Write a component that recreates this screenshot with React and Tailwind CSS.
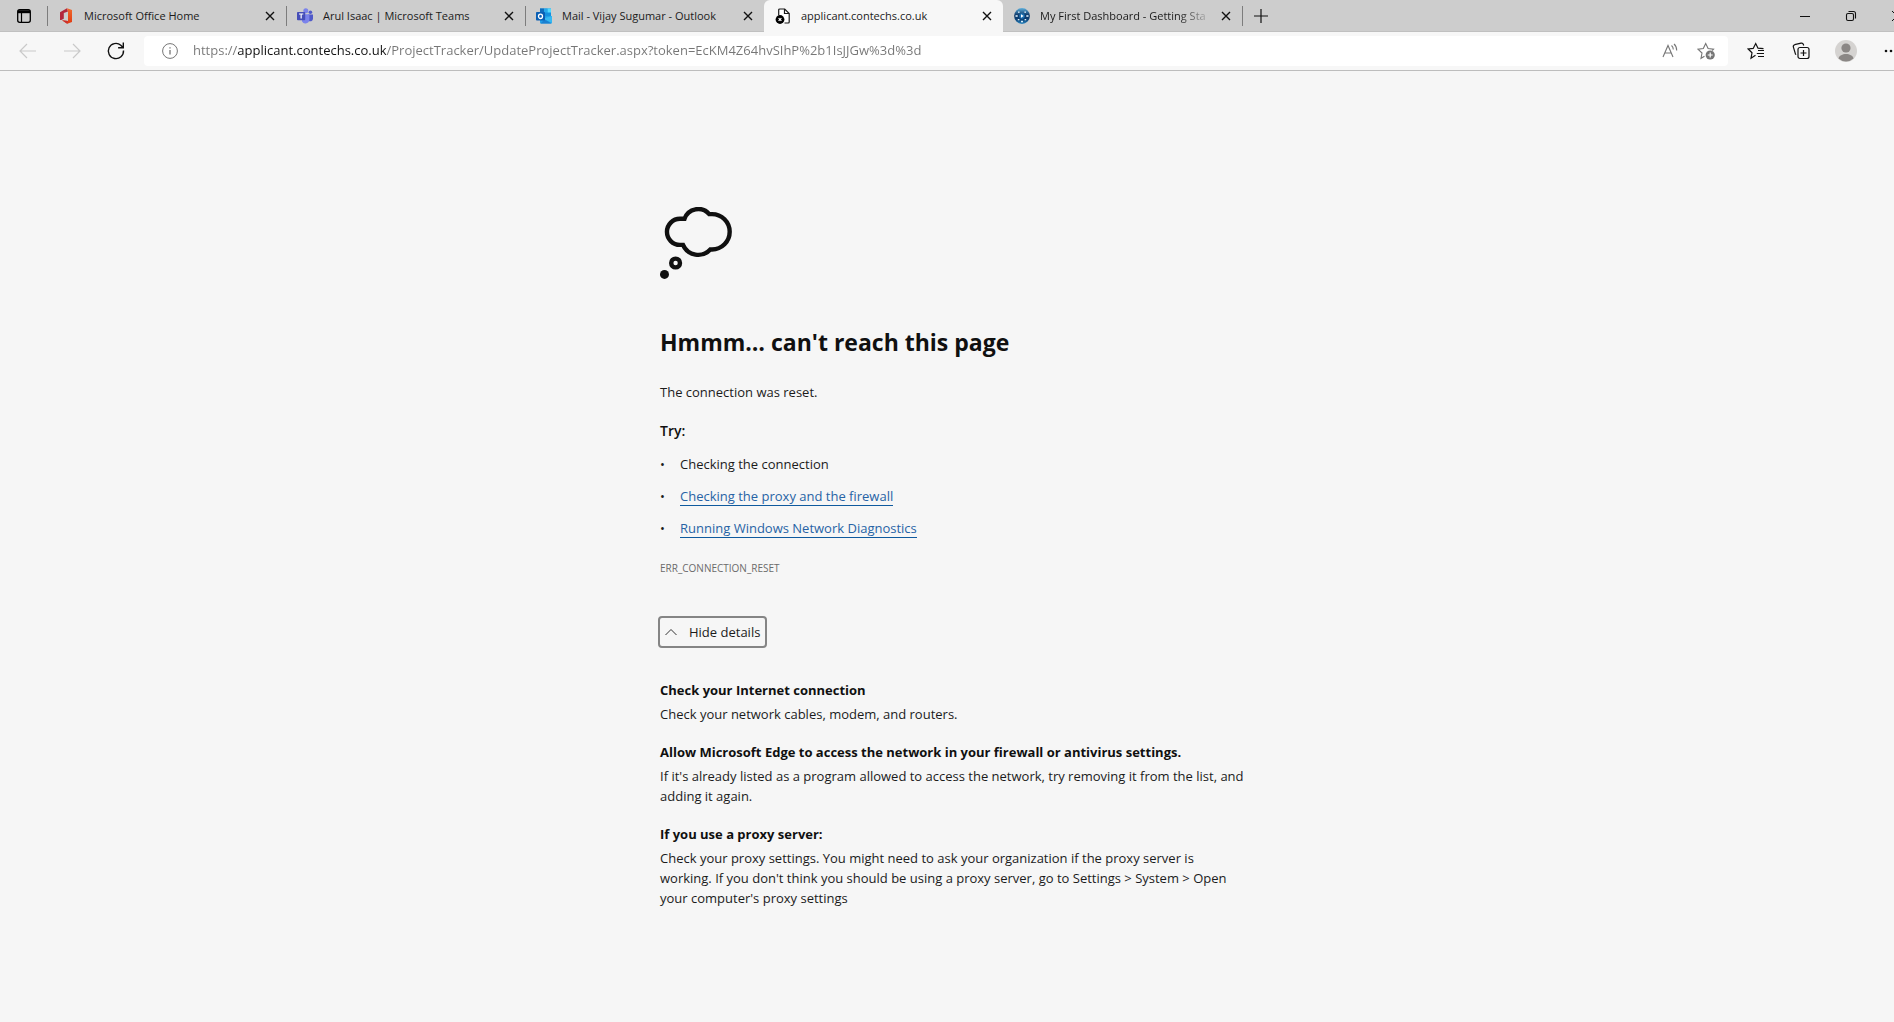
import React from "react";

const OfficeIcon = () => (
  <svg viewBox="0 0 16 16" className="size-4">
    <defs>
      <linearGradient id="office" x1="0" y1="0" x2="0" y2="1">
        <stop offset="0" stopColor="#f06a2c" />
        <stop offset="1" stopColor="#e03a12" />
      </linearGradient>
    </defs>
    <path d="M2 4.200 9 .3l1 3.100-4.200 1.700v5.700L3.300 12 2 12Z" fill="#b3263c" />
    <path d="m9 .2 5 1.800v12L9.200 15.800 4 12.300l6 .6V3.200Z" fill="url(#office)" />
    <path d="M4 12.300 10 12.900 9.200 15.800Z" fill="#c92f30" />
  </svg>
);

const TeamsIcon = () => (
  <svg viewBox="0 0 16 16" className="size-4">
    <circle cx="13.4" cy="4.2" r="1.8" fill="#5059c9" />
    <path d="M11 6.6h5v4.2a2.6 2.6 0 0 1-4.6 1.6Z" fill="#5059c9" />
    <circle cx="8.8" cy="2.8" r="2.5" fill="#7b83eb" />
    <path d="M5 6.3h7.4v5.2a4 4 0 0 1-7.4 2Z" fill="#7b83eb" />
    <rect x="0" y="4" width="8.2" height="8.2" rx="0.8" fill="#464eb8" />
    <path d="M2 6h4.3M4.15 6v4.6" stroke="#fff" strokeWidth="1.2" />
  </svg>
);

const OutlookIcon = () => (
  <svg viewBox="0 0 16 16" className="size-4">
    <path d="M4 .5h11v8H4Z" fill="#1490df" />
    <path d="M4 .5h4v4H4Z" fill="#0f6cbd" />
    <path d="M8 .5h3.6v4H8Z" fill="#28a8ea" />
    <path d="M11.6.5H15v4h-3.4Z" fill="#50d9ff" />
    <path d="M4 8h12v6.6a1 1 0 0 1-1 1H5a1 1 0 0 1-1-1Z" fill="#1f9fe8" />
    <path d="M16 8v7L7 10.5Z" fill="#35b8f1" />
    <path d="m4.500 15.500 4-4 7 4Z" fill="#1a7fd0" />
    <rect x="0" y="4" width="9" height="8.600" rx="0.800" fill="#0a5fb4" />
    <ellipse cx="4.500" cy="8.300" rx="2" ry="2.200" fill="none" stroke="#fff" strokeWidth="1.300" />
  </svg>
);

const BrokenPageIcon = () => (
  <svg viewBox="0 0 16 16" className="size-4">
    <path d="M3.700 7V2a1 1 0 0 1 1-1h5l4.500 4.500v8.500a1 1 0 0 1-1 1H9.500" fill="#fff" stroke="#1a1a1a" strokeWidth="1.200" />
    <path d="M9.500 1v4.500h4.500" fill="none" stroke="#1a1a1a" strokeWidth="1.200" />
    <circle cx="5" cy="11.500" r="4.400" fill="#000" />
    <path d="m3.600 10.100 2.800 2.800m0-2.800-2.800 2.800" stroke="#fff" strokeWidth="1.200" />
  </svg>
);

const DashboardIcon = () => (
  <svg viewBox="0 0 16 16" className="size-4">
    <defs>
      <linearGradient id="globe" x1="0" y1="0" x2="0" y2="1">
        <stop offset="0" stopColor="#5fb0dc" />
        <stop offset="0.450" stopColor="#0b3566" />
        <stop offset="0.700" stopColor="#0b3f74" />
        <stop offset="1" stopColor="#2a86c0" />
      </linearGradient>
    </defs>
    <circle cx="8" cy="8" r="7.900" fill="url(#globe)" />
    <circle cx="8" cy="8" r="2.800" fill="#1c6fb0" />
    <path d="m7 6.200 2.700 1.800-2.700 1.800Z" fill="#fff" />
    <g fill="#d9eefa">
      <rect x="4" y="3.500" width="1.600" height="1.300" />
      <rect x="10.400" y="3.500" width="1.600" height="1.300" />
      <rect x="1.500" y="7.200" width="2.200" height="1.600" />
      <rect x="12.300" y="7.200" width="2.200" height="1.600" />
      <rect x="3.800" y="11" width="1.600" height="1.300" />
      <rect x="10.600" y="11" width="1.600" height="1.300" />
      <rect x="7" y="12.800" width="2" height="1.500" />
    </g>
  </svg>
);

const tabs = [
  { title: "Microsoft Office Home", Icon: OfficeIcon },
  { title: "Arul Isaac | Microsoft Teams", Icon: TeamsIcon },
  { title: "Mail - Vijay Sugumar - Outlook", Icon: OutlookIcon },
  { title: "applicant.contechs.co.uk", Icon: BrokenPageIcon, active: true },
  { title: "My First Dashboard - Getting Sta", Icon: DashboardIcon, faded: true },
];

function Tab({ title, Icon, active, divider, faded }) {
  return (
    <div
      className={
        active
          ? "flex h-8 w-[239px] items-center rounded-t-md bg-[#f7f7f7] pr-2"
          : "flex h-8 w-[239px] items-center pr-2"
      }
    >
      <span className={divider ? "h-5 w-px bg-[#7d7d7d]" : "h-5 w-px"} />
      <button role="tab" aria-selected={!!active} className="flex min-w-0 flex-1 items-center gap-[10px] pl-[10px]">
        <span className="shrink-0"><Icon /></span>
        <span
          className={
            faded
              ? "text-left whitespace-nowrap [mask-image:linear-gradient(to_right,#000_calc(100%-28px),#0003)]"
              : "text-left whitespace-nowrap"
          }
        >
          {title}
        </span>
      </button>
      <button aria-label={"Close " + title} className="flex size-4 shrink-0 items-center justify-center">
        <svg viewBox="0 0 10 10" className="size-[10px]" stroke="#111" strokeWidth="1.400">
          <path d="m1 1 8 8M9 1 1 9" />
        </svg>
      </button>
    </div>
  );
}

function TabStrip() {
  return (
    <header className="flex h-8 items-center bg-[#cdcdcd] text-[11px] text-[#1b1b1b] shadow-[inset_0_-1px_0_#c0c0c0]">
      <button aria-label="Tab actions" className="flex w-[47px] justify-center">
        <svg viewBox="0 0 16 16" className="size-4" fill="none" stroke="#000">
          <rect x="1.700" y="1.700" width="12.600" height="12.600" rx="2" strokeWidth="1.300" />
          <path d="M2 3.700h12" strokeWidth="3" />
          <path d="M5.500 5v9" strokeWidth="1.200" />
        </svg>
      </button>
      <div role="tablist" className="flex">
        {tabs.map((tab, i) => (
          <Tab key={tab.title} {...tab} divider={i < 3} />
        ))}
      </div>
      <span className="h-5 w-px bg-[#7d7d7d]" />
      <button aria-label="New tab" className="ml-2 p-[2px]">
        <svg viewBox="0 0 16 16" className="size-4" stroke="#111" strokeWidth="1.200">
          <path d="M8 1v14M1 8h14" />
        </svg>
      </button>
      <div className="ml-auto flex">
        <button aria-label="Minimize" className="flex w-[46px] justify-center">
          <svg viewBox="0 0 12 12" className="size-3" stroke="#111"><path d="M1 6.500h10" /></svg>
        </button>
        <button aria-label="Restore" className="flex w-[46px] justify-center">
          <svg viewBox="0 0 12 12" className="size-3" stroke="#111" fill="none" strokeWidth="1.100">
            <rect x="1.500" y="3.500" width="7" height="7" rx="1.500" />
            <path d="M3.500 1.500H8.500a2 2 0 0 1 2 2v5" />
          </svg>
        </button>
        <button aria-label="Close window" className="flex w-[46px] justify-center">
          <svg viewBox="0 0 12 12" className="size-3" stroke="#111"><path d="m1 1 10 10M11 1 1 11" /></svg>
        </button>
      </div>
    </header>
  );
}

function Toolbar() {
  return (
    <nav className="flex h-[39px] items-center border-b border-[#bdbdbd] bg-[#f7f7f7]">
      <div className="flex w-36 pl-[6px]">
        <button aria-label="Back" className="flex w-11 justify-center">
          <svg viewBox="0 0 20 20" className="size-5" fill="none" stroke="#c9c9c9" strokeWidth="1.200">
            <path d="M18 10H2.500M9 3l-7 7 7 7" />
          </svg>
        </button>
        <button aria-label="Forward" className="flex w-11 justify-center">
          <svg viewBox="0 0 20 20" className="size-5" fill="none" stroke="#c9c9c9" strokeWidth="1.200">
            <path d="M2 10h15.500M11 3l7 7-7 7" />
          </svg>
        </button>
        <button aria-label="Refresh" className="flex w-11 justify-center">
          <svg viewBox="0 0 20 20" className="size-5" fill="none" stroke="#111" strokeWidth="1.400">
            <path d="M17.500 9.500A7.600 7.600 0 1 1 14.800 4.200L17 6.500M17.300 1.500v5.200h-5.200" />
          </svg>
        </button>
      </div>
      <div className="flex h-[30px] min-w-0 flex-1 items-center rounded-sm bg-white pr-1 pl-[18px]">
        <svg viewBox="0 0 16 16" className="size-4 shrink-0" fill="none" stroke="#767676">
          <circle cx="8" cy="8" r="7.400" />
          <path d="M8 7v4.500M8 4.300v1.300" strokeWidth="1.300" />
        </svg>
        <input
          aria-label="Address"
          readOnly
          value="https://applicant.contechs.co.uk/ProjectTracker/UpdateProjectTracker.aspx?token=EcKM4Z64hvSIhP%2b1IsJJGw%3d%3d"
          className="ml-[15px] min-w-0 flex-1 bg-[linear-gradient(to_right,#767676_44px,#111_44px,#111_193px,#767676_193px)] bg-clip-text text-[13px] text-transparent outline-none"
        />
        <button aria-label="Read aloud" className="flex w-9 justify-center">
          <svg viewBox="0 0 18 18" className="size-[18px]" fill="none" stroke="#767676" strokeWidth="1.100">
            <path d="M2 15 7 3.500 12 15M3.800 11h6.400M10.500 3.500c1.200 1 1.800 2.300 1.800 4M13 2c1.800 1.500 2.700 3.700 2.700 6.500" />
          </svg>
        </button>
        <button aria-label="Add to favorites" className="flex w-9 justify-center">
          <svg viewBox="0 0 18 18" className="size-[18px]" fill="none" stroke="#767676" strokeWidth="1.100">
            <path d="M7.500 14.200 4 16.300l1-5.300L1 7.200l5.300-.6L8.700 1.500l2.400 5.100 5.400.6-1.300 1.300" />
            <circle cx="13.200" cy="13" r="4.600" fill="#767676" stroke="none" />
            <path d="M13.200 10.500v5M10.700 13h5" stroke="#fff" strokeWidth="1.200" />
          </svg>
        </button>
      </div>
      <div className="flex items-center pr-[7px] pl-[5px]">
        <button aria-label="Favorites" className="flex w-[45px] justify-center">
          <svg viewBox="0 0 18 18" className="size-[18px]" fill="none" stroke="#111" strokeWidth="1.200">
            <path d="M8.500 13.300 4 16.300l1-5.500L1.200 7l5-.6L8.700 1.500l2.300 4.700 5.500.4M11 8.500h6M9.800 11.500H17M11 14.500h6" />
          </svg>
        </button>
        <button aria-label="Collections" className="flex w-[45px] justify-center">
          <svg viewBox="0 0 18 18" className="size-[18px]" fill="none" stroke="#111" strokeWidth="1.200">
            <rect x="6" y="5.500" width="11" height="11" rx="2" />
            <path d="M11.500 8v6M8.500 11h6M4.200 12.600 3.500 12.200 1.400 5.200A2 2 0 0 1 2.700 2.700L9 1.200a2 2 0 0 1 2.400 1.300l.3 1" />
          </svg>
        </button>
        <button aria-label="Profile" className="flex w-[45px] justify-center">
          <svg viewBox="0 0 22 22" className="size-[22px]">
            <circle cx="11" cy="11" r="11" fill="#d5d3d1" />
            <circle cx="11" cy="8" r="4.600" fill="#8b8785" />
            <path d="M3.500 18.500c1-6 14-6 15 0A11 11 0 0 1 3.500 18.500Z" fill="#8b8785" />
          </svg>
        </button>
        <button aria-label="Settings and more" className="flex w-[45px] justify-center">
          <svg viewBox="0 0 16 16" className="size-4" fill="#111">
            <circle cx="3" cy="8" r="1.300" /><circle cx="8" cy="8" r="1.300" /><circle cx="13" cy="8" r="1.300" />
          </svg>
        </button>
      </div>
    </nav>
  );
}

const ThoughtCloud = () => (
  <svg viewBox="0 0 72 72" className="size-[72px]" fill="none" stroke="#101010" strokeWidth="4.400">
    <path d="M24.500 11.800A14.500 14.500 0 0 1 49.200 7.100H52A17.700 17.700 0 0 1 52 42.500H50.300A16.500 16.500 0 0 1 23 37.900H20A13 13 0 0 1 20 11.800Z" />
    <circle cx="15.600" cy="56" r="4.400" />
    <circle cx="4.500" cy="67.400" r="4.500" fill="#101010" stroke="none" />
  </svg>
);

const tips = [
  { title: "Check your Internet connection", text: "Check your network cables, modem, and routers." },
  {
    title: "Allow Microsoft Edge to access the network in your firewall or antivirus settings.",
    text: "If it's already listed as a program allowed to access the network, try removing it from the list, and adding it again.",
  },
  {
    title: "If you use a proxy server:",
    text: "Check your proxy settings. You might need to ask your organization if the proxy server is working. If you don't think you should be using a proxy server, go to Settings > System > Open your computer's proxy settings",
  },
];

const suggestions = [
  { label: "Checking the connection" },
  { label: "Checking the proxy and the firewall", link: true },
  { label: "Running Windows Network Diagnostics", link: true },
];

function ErrorPage() {
  return (
    <main className="mx-auto max-w-[600px] pt-[136px] pb-12 text-[13px] leading-5 text-[#1b1b1b]">
      <ThoughtCloud />
      <h1 className="mt-[47px] text-[23px] leading-8 font-bold text-[#101010]">Hmmm… can't reach this page</h1>
      <p className="mt-6">The connection was reset.</p>
      <h2 className="mt-[19px] text-sm leading-5 font-semibold text-[#101010]">Try:</h2>
      <ul className="mt-[13px] flex flex-col gap-3">
        {suggestions.map(({ label, link }) => (
          <li key={label} className="flex">
            <span className="w-5">•</span>
            {link ? <a href="#" className="h-5 border-b border-[#0f5a9e] text-[#2763a5]">{label}</a> : label}
          </li>
        ))}
      </ul>
      <p className="mt-5 text-[10px] leading-5 text-[#6b6b6b]">ERR_CONNECTION_RESET</p>
      <button
        aria-expanded="true"
        className="mt-[38px] -ml-[2px] flex h-8 items-center gap-3 rounded-sm border-2 border-[#858585] px-[5px]"
      >
        <svg viewBox="0 0 12 12" className="size-3" fill="none" stroke="#333"><path d="m.5 9 5.500-5.500L11.500 9" /></svg>
        Hide details
      </button>
      <div className="mt-8 flex flex-col gap-[18px]">
        {tips.map(({ title, text }) => (
          <section key={title}>
            <h3 className="font-bold text-[#101010]">{title}</h3>
            <p className="mt-1 pr-[14px]">{text}</p>
          </section>
        ))}
      </div>
    </main>
  );
}

export default function App() {
  return (
    <div className="min-h-screen overflow-hidden bg-[#f6f6f6] font-['Open_Sans','Noto_Sans',sans-serif]">
      <div className="-mr-[26px]">
        <TabStrip />
        <Toolbar />
        <ErrorPage />
      </div>
    </div>
  );
}
